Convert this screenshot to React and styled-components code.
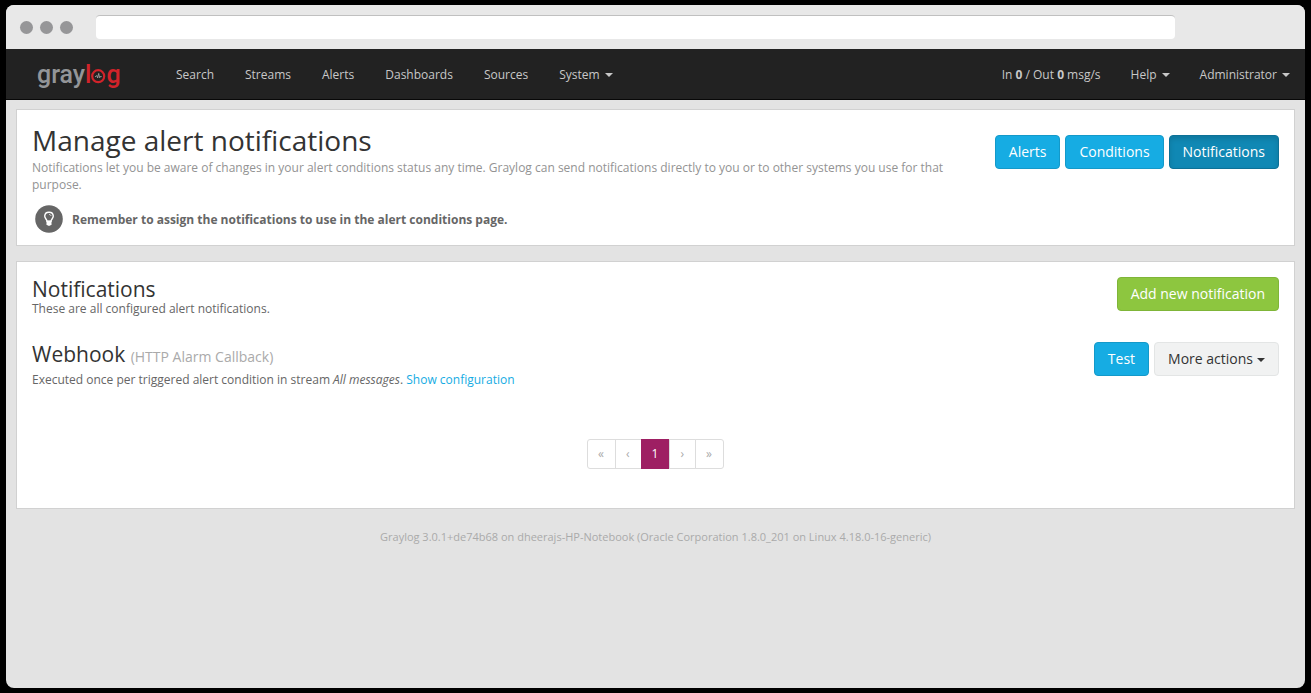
import React from 'react';
import styled, { createGlobalStyle, css } from 'styled-components';

const GlobalStyle = createGlobalStyle`
  *, *::before, *::after { box-sizing: border-box; }
  body {
    margin: 0;
    background: #000;
    color: #666;
    font-family: 'Open Sans', 'Noto Sans', sans-serif;
    font-size: 12px;
    line-height: 17px;
  }
  h1, h2, p, ul { margin: 0; padding: 0; }
  a { color: #16ace3; text-decoration: none; }
`;

const Window = styled.div`
  display: flex;
  flex-direction: column;
  min-height: calc(100vh - 10px);
  margin: 5px 6px;
  border-radius: 8px;
  overflow: hidden;
  background: #e3e3e3;
`;

const TitleBar = styled.div`
  display: flex;
  align-items: center;
  height: 44px;
  padding: 0 130px 0 14px;
  background: #e8e8e8;
`;

const Dots = styled.div`
  display: flex;
  gap: 7px;
  margin-right: 23px;
`;

const Dot = styled.span`
  width: 13px;
  height: 13px;
  border-radius: 50%;
  background: #969698;
`;

const AddressInput = styled.input`
  flex: 1;
  min-width: 0;
  height: 24px;
  padding: 0 8px;
  border: 0;
  border-top: 1px solid #c0c0c0;
  border-radius: 4px;
  background: #fff;
  outline: 0;
`;

const Navbar = styled.nav`
  display: flex;
  justify-content: space-between;
  height: 51px;
  padding: 1px 0 0 31px;
  background: #222;
  border-bottom: 1px solid #080808;
`;

const NavGroup = styled.div`
  display: flex;
  align-items: center;
  gap: ${({ $gap = 0 }) => $gap}px;
`;

const Brand = styled.a`
  display: flex;
  align-items: baseline;
  width: 123px;
  color: #939598;
  font: 500 25px/48px Roboto, sans-serif;
`;

const BrandRed = styled.span`
  display: flex;
  align-items: baseline;
  color: #d2232a;
`;

const NavLink = styled.a`
  padding: 15px;
  color: #c8c8c8;
  line-height: 20px;
`;

const Caret = styled.span`
  display: inline-block;
  margin-left: ${({ $gap = 5 }) => $gap}px;
  vertical-align: middle;
  border-top: 4px solid;
  border-left: 4px solid transparent;
  border-right: 4px solid transparent;
`;

const Main = styled.main`
  display: flex;
  flex-direction: column;
  gap: 15px;
  padding: 9px 10px 0;
`;

const Panel = styled.section`
  padding: 15px 15px ${({ $bottom }) => $bottom}px;
  background: #fff;
  border: 1px solid #d1d1d1;
`;

const Row = styled.div`
  display: flex;
  justify-content: space-between;
  align-items: flex-start;
  gap: 30px;
  & + & { margin-top: 25px; }
`;

const Intro = styled.div`
  flex: 0 1 928px;
`;

const PageTitle = styled.h1`
  margin-bottom: 4px;
  color: #333;
  font-size: 28px;
  font-weight: 400;
  line-height: 30px;
`;

const SectionTitle = styled.h2`
  margin-bottom: ${({ $gap = 0 }) => $gap}px;
  padding-top: 2px;
  color: #333;
  font-size: 21px;
  font-weight: 400;
  line-height: 21px;
  small { color: #aaa; font-size: 14px; line-height: 14px; }
`;

const Description = styled.p`
  color: #939393;
`;

const Tip = styled.p`
  display: flex;
  align-items: center;
  gap: 9px;
  margin-top: 12px;
  padding-left: 3px;
  font-weight: 700;
`;

const Buttons = styled.div`
  display: flex;
  flex: none;
  gap: 5px;
  margin-top: ${({ $top = 0 }) => $top}px;
`;

const tones = {
  info: css`background: #16ace3; border-color: #1499c9; color: #fff;`,
  active: css`background: #1088b4; border-color: #0d7197; color: #fff; box-shadow: inset 0 3px 5px rgba(0, 0, 0, 0.125);`,
  success: css`background: #8dc63f; border-color: #7fb538; color: #fff;`,
  plain: css`background: #f1f2f2; border-color: #e3e5e5; color: #333;`,
};

const Button = styled.button`
  height: 34px;
  padding: 0 13px;
  border: 1px solid;
  border-radius: 4px;
  font: 400 14px/20px 'Open Sans', sans-serif;
  white-space: nowrap;
  ${({ $tone }) => tones[$tone]}
`;

const Pagination = styled.ul`
  display: flex;
  justify-content: center;
  margin-top: 51px;
  list-style: none;
`;

const PageButton = styled.button`
  height: 30px;
  margin-left: -1px;
  padding: 5px 11px 5px 10px;
  border: 1px solid ${({ $current }) => ($current ? '#9e1f63' : '#ddd')};
  background: ${({ $current }) => ($current ? '#9e1f63' : '#fff')};
  color: ${({ $current }) => ($current ? '#fff' : '#aaa')};
  font: 400 12px/18px 'Open Sans', sans-serif;
  li:first-child > & { margin-left: 0; border-radius: 3px 0 0 3px; }
  li:last-child > & { border-radius: 0 3px 3px 0; }
`;

const Footer = styled.footer`
  padding: 20px;
  color: #aaa;
  font-size: 11px;
  line-height: 16px;
  text-align: center;
`;

const PulseRing = () => (
  <svg width="15" height="14" viewBox="0 0 15 14" fill="none" overflow="visible" aria-hidden="true">
    <circle cx="7.2" cy="7.2" r="6" stroke="#d2232a" strokeWidth="2.2" />
    <path d="M4 7.6h1l.8-1.2.9 2.6 1-4.6 1 4.4.8-1.8.5.6h.6" stroke="#b4b4b4" strokeWidth=".7" />
  </svg>
);

const Bulb = () => (
  <svg width="28" height="28" viewBox="0 0 28 28" fill="none" aria-hidden="true">
    <circle cx="14" cy="14" r="13.8" fill="#666" />
    <path d="M12 16.3c0-2-2.3-2.8-2.3-5.2A4.2 4.2 0 0 1 14 7.3a4.2 4.2 0 0 1 4.3 3.8c0 2.4-2.3 3.2-2.3 5.2z" stroke="#fff" strokeWidth="1.4" />
    <path d="M14 9.5c1.1 0 2 .6 2 1.5" stroke="#fff" strokeWidth=".8" />
    <path d="M11.5 15.8h5v3.5L15 20.8h-2l-1.5-1.5z" fill="#fff" />
  </svg>
);

const links = ['Search', 'Streams', 'Alerts', 'Dashboards', 'Sources'];
const pages = [
  ['«', 'First'],
  ['‹', 'Previous'],
  ['1', 'Page 1'],
  ['›', 'Next'],
  ['»', 'Last'],
];

export default function App() {
  return (
    <Window>
      <GlobalStyle />
      <TitleBar>
        <Dots><Dot /><Dot /><Dot /></Dots>
        <AddressInput type="text" aria-label="Address" />
      </TitleBar>
      <Navbar>
        <NavGroup $gap={1}>
          <Brand href="#" aria-label="graylog">
            gray<BrandRed>l<PulseRing />g</BrandRed>
          </Brand>
          {links.map((label) => <NavLink href="#" key={label}>{label}</NavLink>)}
          <NavLink href="#">System<Caret /></NavLink>
        </NavGroup>
        <NavGroup>
          <NavLink href="#">In <b>0</b> / Out <b>0</b> msg/s</NavLink>
          <NavLink href="#">Help<Caret /></NavLink>
          <NavLink href="#">Administrator<Caret /></NavLink>
        </NavGroup>
      </Navbar>
      <Main>
        <Panel $bottom={12}>
          <Row>
            <Intro>
              <PageTitle>Manage alert notifications</PageTitle>
              <Description>
                Notifications let you be aware of changes in your alert conditions status any time. Graylog can send
                notifications directly to you or to other systems you use for that purpose.
              </Description>
              <Tip><Bulb />Remember to assign the notifications to use in the alert conditions page.</Tip>
            </Intro>
            <Buttons $top={10}>
              <Button $tone="info">Alerts</Button>
              <Button $tone="info">Conditions</Button>
              <Button $tone="active">Notifications</Button>
            </Buttons>
          </Row>
        </Panel>
        <Panel $bottom={39}>
          <Row>
            <div>
              <SectionTitle>Notifications</SectionTitle>
              <p>These are all configured alert notifications.</p>
            </div>
            <Buttons>
              <Button $tone="success">Add new notification</Button>
            </Buttons>
          </Row>
          <Row>
            <div>
              <SectionTitle $gap={6}>Webhook <small>(HTTP Alarm Callback)</small></SectionTitle>
              <p>
                Executed once per triggered alert condition in stream <em>All messages</em>.{' '}
                <a href="#">Show configuration</a>
              </p>
            </div>
            <Buttons>
              <Button $tone="info">Test</Button>
              <Button $tone="plain">More actions<Caret $gap={4} /></Button>
            </Buttons>
          </Row>
          <Pagination>
            {pages.map(([glyph, name]) => (
              <li key={name}>
                <PageButton $current={glyph === '1'} aria-label={name}>{glyph}</PageButton>
              </li>
            ))}
          </Pagination>
        </Panel>
      </Main>
      <Footer>Graylog 3.0.1+de74b68 on dheerajs-HP-Notebook (Oracle Corporation 1.8.0_201 on Linux 4.18.0-16-generic)</Footer>
    </Window>
  );
}
